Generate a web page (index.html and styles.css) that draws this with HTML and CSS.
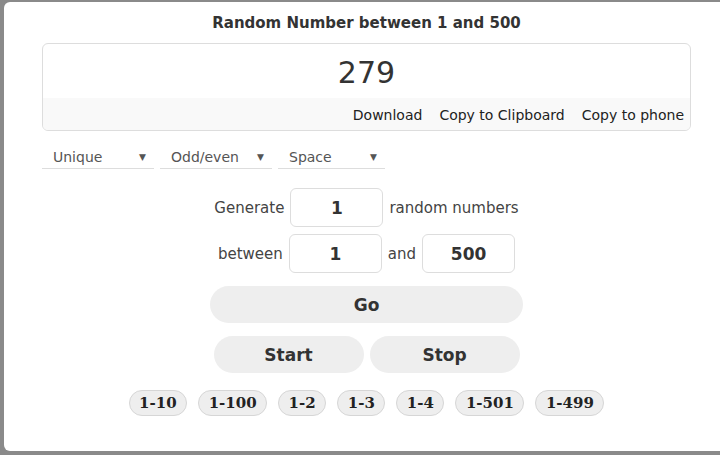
FILE: index.html
```html
<!DOCTYPE html>
<html>
<head>
<meta charset="utf-8">
<link rel="stylesheet" href="styles.css">
</head>
<body>
<div class="panel">
  <h1 class="title">Random Number between 1 and 500</h1>
  <div class="result">
    <div class="number">279</div>
    <div class="actions">
      <span>Download</span>
      <span>Copy to Clipboard</span>
      <span>Copy to phone</span>
    </div>
  </div>
  <div class="selects">
    <div class="select"><span>Unique</span><span class="arrow">▼</span></div>
    <div class="select"><span>Odd/even</span><span class="arrow">▼</span></div>
    <div class="select select-narrow"><span>Space</span><span class="arrow">▼</span></div>
  </div>
  <div class="form-row">
    <span>Generate</span>
    <div class="field">1</div>
    <span>random numbers</span>
  </div>
  <div class="form-row">
    <span>between</span>
    <div class="field">1</div>
    <span>and</span>
    <div class="field">500</div>
  </div>
  <div class="btn-row">
    <button class="btn btn-go">Go</button>
  </div>
  <div class="btn-row">
    <button class="btn btn-half">Start</button>
    <button class="btn btn-half">Stop</button>
  </div>
  <div class="chips">
    <span class="chip">1-10</span>
    <span class="chip">1-100</span>
    <span class="chip">1-2</span>
    <span class="chip">1-3</span>
    <span class="chip">1-4</span>
    <span class="chip">1-501</span>
    <span class="chip">1-499</span>
  </div>
</div>
</body>
</html>
```
FILE: styles.css
```css
html, body {
  margin: 0;
  padding: 0;
  overflow: hidden;
  height: 455px;
}
body {
  background: #8a8a8a;
  font-family: "DejaVu Sans", Verdana, sans-serif;
  color: #333;
}
.panel {
  margin: 2px 0 0 4px;
  width: 725px;
  height: 449px;
  box-sizing: border-box;
  background: #fff;
  border-radius: 6px;
  padding: 12px 38px 0;
}
.title {
  margin: 0;
  font-size: 15px;
  line-height: 18px;
  font-weight: bold;
  text-align: center;
  color: #333;
}
.result {
  margin-top: 11px;
  border: 1px solid #ddd;
  border-radius: 6px;
  overflow: hidden;
}
.number {
  height: 54px;
  font-size: 30px;
  line-height: 58px;
  text-align: center;
  color: #333;
}
.actions {
  height: 32px;
  background: #f9f9f9;
  display: flex;
  justify-content: flex-end;
  align-items: center;
  gap: 17px;
  padding: 2px 6px 0 0;
  box-sizing: border-box;
  font-size: 14px;
  color: #222;
}
.selects {
  display: flex;
  gap: 6px;
  margin-top: 14px;
}
.select {
  width: 112px;
  height: 24px;
  box-sizing: border-box;
  border-bottom: 1px solid #ddd;
  display: flex;
  align-items: center;
  justify-content: space-between;
  padding: 0 8px 0 11px;
  font-size: 14px;
  color: #555;
}
.select-narrow {
  width: 107px;
}
.arrow {
  font-size: 9px;
  color: #555;
}
.form-row {
  display: flex;
  justify-content: center;
  align-items: center;
  gap: 6px;
  margin-top: 7px;
  font-size: 15px;
  color: #444;
}
.selects + .form-row {
  margin-top: 19px;
}
.field {
  width: 93px;
  height: 39px;
  box-sizing: border-box;
  border: 1px solid #ddd;
  border-radius: 6px;
  display: flex;
  align-items: center;
  justify-content: center;
  font-size: 17px;
  font-weight: bold;
  color: #333;
}
.btn-row {
  display: flex;
  justify-content: center;
  gap: 6px;
  margin-top: 13px;
}
.btn {
  border: none;
  background: #eee;
  border-radius: 19px;
  height: 37px;
  font-family: "DejaVu Sans", Verdana, sans-serif;
  font-size: 17px;
  font-weight: bold;
  color: #333;
  padding: 0;
}
.btn-go {
  width: 313px;
}
.btn-half {
  width: 150px;
}
.chips {
  display: flex;
  justify-content: center;
  gap: 11px;
  margin-top: 17px;
}
.chip {
  height: 26px;
  box-sizing: border-box;
  border: 1px solid #d6d6d6;
  background: #eee;
  border-radius: 13px;
  padding: 0 9.5px;
  display: flex;
  align-items: center;
  font-family: "DejaVu Serif", Georgia, serif;
  font-size: 15px;
  font-weight: bold;
  color: #222;
}
```
